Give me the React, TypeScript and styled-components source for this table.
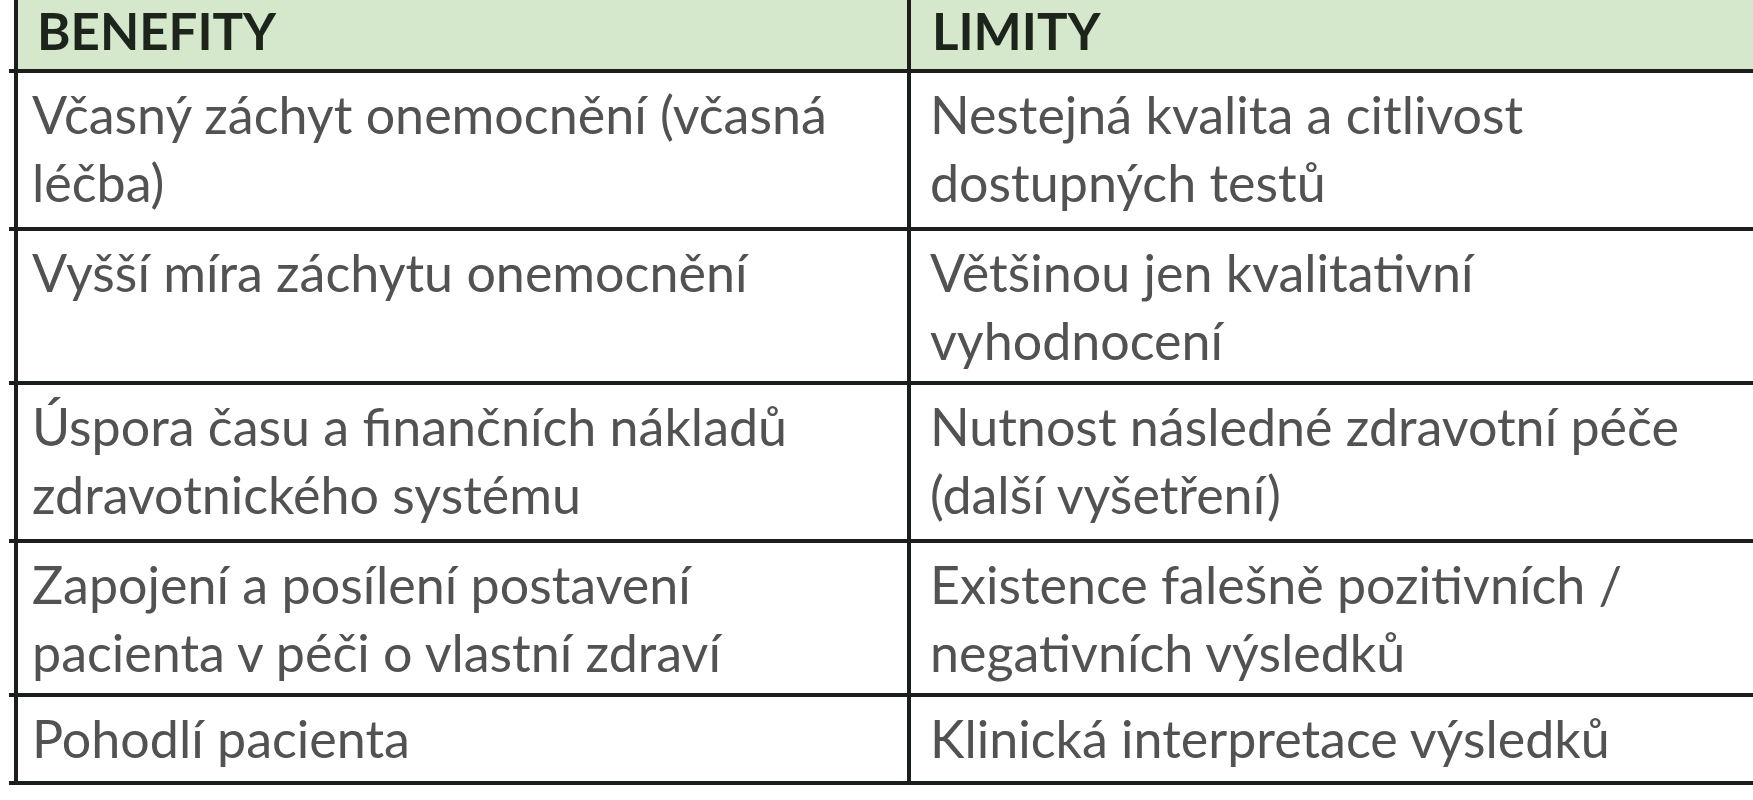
import React from "react";
import styled, { createGlobalStyle } from "styled-components";

const Global = createGlobalStyle`
  html, body { margin: 0; padding: 0; background: #ffffff; }
  body { font-family: "Lato", "Liberation Sans", sans-serif; }
`;

const Page = styled.div`
  width: 1753px;
  height: 800px;
  overflow: hidden;
  background: #fff;
`;

const Table = styled.div`
  display: flex;
  flex-direction: column;
  padding-left: 9px;
`;

const Row = styled.div<{ $h: number }>`
  display: grid;
  grid-template-columns: 5px 893px 1fr;
  height: ${(p) => p.$h}px;
  border-bottom: 4px solid #1b1f1b;
`;

const Gap = styled.div`
  background: #fff;
`;

const Cell = styled.div<{ $head?: boolean; $first?: boolean }>`
  box-sizing: border-box;
  border-left: 4px solid #1b1f1b;
  background: ${(p) => (p.$head ? "#d5e8cb" : "#ffffff")};
  padding: ${(p) =>
    p.$head
      ? `0 0 8px ${p.$first ? 19 : 21}px`
      : `7px 0 0 ${p.$first ? 14 : 19}px`};
  display: flex;
  align-items: ${(p) => (p.$head ? "center" : "flex-start")};
`;

const HeadText = styled.span`
  font-family: "Lato", "Liberation Sans", sans-serif;
  font-weight: 700;
  font-size: 51px;
  color: #1c241c;
  line-height: 1;
`;

const BodyText = styled.span`
  font-family: "Lato", "Liberation Sans", sans-serif;
  font-weight: 400;
  font-size: 52px;
  line-height: 68px;
  color: #525252;
  white-space: nowrap;
`;

const rows: { h: number; a: string[]; b: string[] }[] = [
  { h: 154, a: ["Včasný záchyt onemocnění (včasná", "léčba)"], b: ["Nestejná kvalita a citlivost", "dostupných testů"] },
  { h: 150, a: ["Vyšší míra záchytu onemocnění"], b: ["Většinou jen kvalitativní", "vyhodnocení"] },
  { h: 154, a: ["Úspora času a finančních nákladů", "zdravotnického systému"], b: ["Nutnost následné zdravotní péče", "(další vyšetření)"] },
  { h: 150, a: ["Zapojení a posílení postavení", "pacienta v péči o vlastní zdraví"], b: ["Existence falešně pozitivních /", "negativních výsledků"] },
  { h: 84, a: ["Pohodlí pacienta"], b: ["Klinická interpretace výsledků"] },
];

const Lines = ({ lines }: { lines: string[] }) => (
  <BodyText>
    {lines.map((l, i) => (
      <React.Fragment key={i}>
        {l}
        {i < lines.length - 1 && <br />}
      </React.Fragment>
    ))}
  </BodyText>
);

export default function App() {
  return (
    <Page>
      <Global />
      <Table>
        <Row $h={69}>
          <Gap />
          <Cell $head $first>
            <HeadText>BENEFITY</HeadText>
          </Cell>
          <Cell $head>
            <HeadText>LIMITY</HeadText>
          </Cell>
        </Row>
        {rows.map((r, i) => (
          <Row key={i} $h={r.h}>
            <Gap />
            <Cell $first>
              <Lines lines={r.a} />
            </Cell>
            <Cell>
              <Lines lines={r.b} />
            </Cell>
          </Row>
        ))}
      </Table>
    </Page>
  );
}
